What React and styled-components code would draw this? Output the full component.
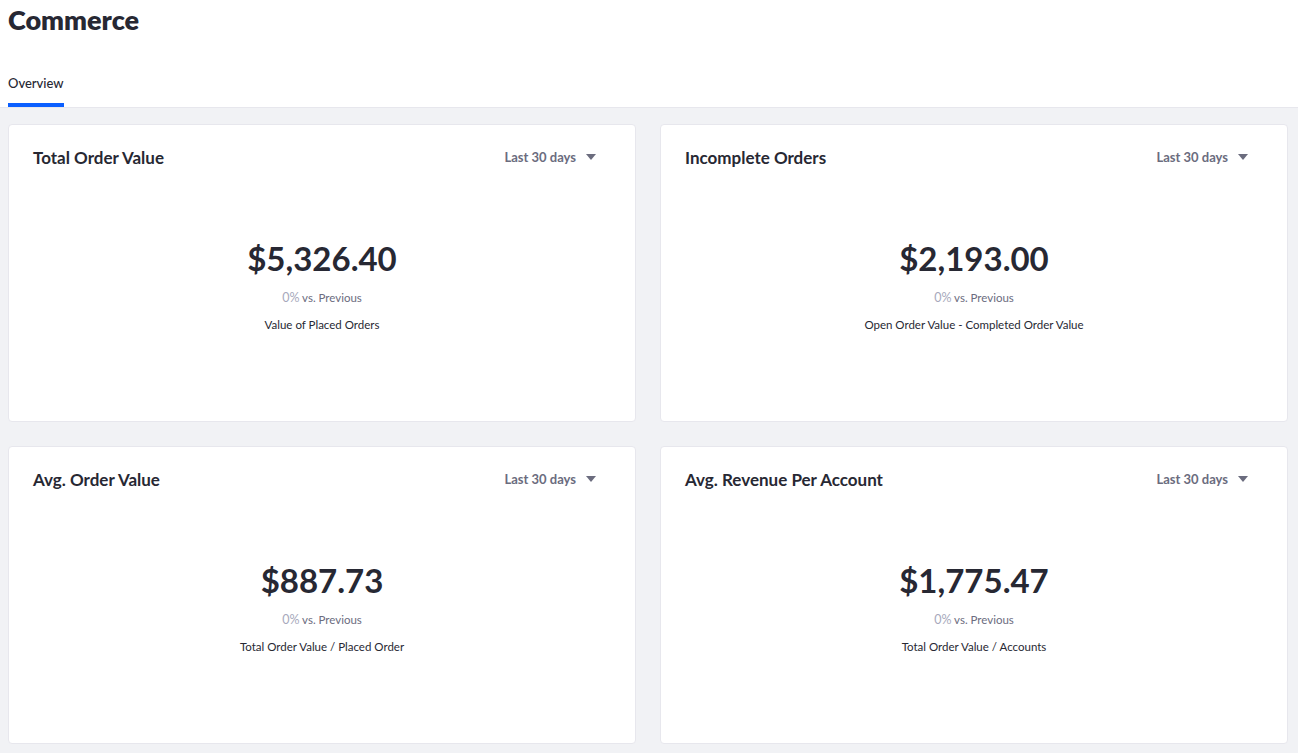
import styled, { createGlobalStyle } from 'styled-components'

const GlobalStyle = createGlobalStyle`
  html, body {
    margin: 0;
    padding: 0;
    background: #ffffff;
  }
  body {
    font-family: Lato, "Noto Sans", sans-serif;
    color: #272833;
  }
`

const Page = styled.div`
  min-height: 753px;
  display: flex;
  flex-direction: column;
  background: #f1f2f5;
`

const Header = styled.header`
  background: #fff;
  padding: 0 8px;
  border-bottom: 1px solid #e7e7ed;
`

const Title = styled.h1`
  margin: 0;
  padding-top: 5px;
  font-size: 27px;
  line-height: 30px;
  font-weight: 800;
  color: #272833;
`

const Tabs = styled.nav`
  display: flex;
  margin-top: 40px;
`

const Tab = styled.div`
  font-size: 13px;
  font-weight: 500;
  color: #272833;
  padding: 0 0 12px;
  line-height: 16px;
  border-bottom: 4px solid ${p => (p.active ? '#0b5fff' : 'transparent')};
`

const Grid = styled.main`
  display: grid;
  grid-template-columns: 628px 628px;
  grid-auto-rows: 298px;
  column-gap: 24px;
  row-gap: 24px;
  padding: 16px 10px 8px 8px;
`

const Card = styled.section`
  background: #fff;
  border: 1px solid #e7e7ed;
  border-radius: 4px;
  padding: 21px 39px 0 24px;
  display: flex;
  flex-direction: column;
`

const CardHead = styled.div`
  display: flex;
  justify-content: space-between;
  align-items: center;
  height: 22px;
`

const CardTitle = styled.h2`
  margin: 0;
  font-size: 17px;
  font-weight: 700;
  color: #272833;
`

const Range = styled.button`
  display: flex;
  align-items: center;
  gap: 10px;
  border: 0;
  background: none;
  padding: 0;
  font-family: inherit;
  font-size: 13px;
  font-weight: 700;
  color: #6b6c7e;
  cursor: pointer;
`

const Body = styled.div`
  display: flex;
  flex-direction: column;
  align-items: center;
  margin-top: 69px;
  padding-left: 15px;
`

const Amount = styled.div`
  font-size: 33px;
  font-weight: 700;
  line-height: 42px;
  color: #272833;
`

const Delta = styled.div`
  margin-top: 11px;
  font-size: 11.5px;
  color: #6b6c7e;
  span {
    color: #a7a9bc;
    font-size: 12.5px;
  }
`

const Note = styled.div`
  margin-top: 13px;
  font-size: 11.5px;
  color: #272833;
`

const Caret = () => (
  <svg width="10" height="6" viewBox="0 0 10 6">
    <path d="M0 0 H10 L5 6 Z" fill="#6b6c7e" />
  </svg>
)

const cards = [
  { title: 'Total Order Value', amount: '$5,326.40', note: 'Value of Placed Orders' },
  { title: 'Incomplete Orders', amount: '$2,193.00', note: 'Open Order Value - Completed Order Value' },
  { title: 'Avg. Order Value', amount: '$887.73', note: 'Total Order Value / Placed Order' },
  { title: 'Avg. Revenue Per Account', amount: '$1,775.47', note: 'Total Order Value / Accounts' },
]

const App = () => {
  return (
    <>
      <GlobalStyle />
      <Page>
        <Header>
          <Title>Commerce</Title>
          <Tabs>
            <Tab active>Overview</Tab>
          </Tabs>
        </Header>
        <Grid>
          {cards.map(c => (
            <Card key={c.title}>
              <CardHead>
                <CardTitle>{c.title}</CardTitle>
                <Range>
                  Last 30 days
                  <Caret />
                </Range>
              </CardHead>
              <Body>
                <Amount>{c.amount}</Amount>
                <Delta>
                  <span>0%</span> vs. Previous
                </Delta>
                <Note>{c.note}</Note>
              </Body>
            </Card>
          ))}
        </Grid>
      </Page>
    </>
  )
}

export default App
